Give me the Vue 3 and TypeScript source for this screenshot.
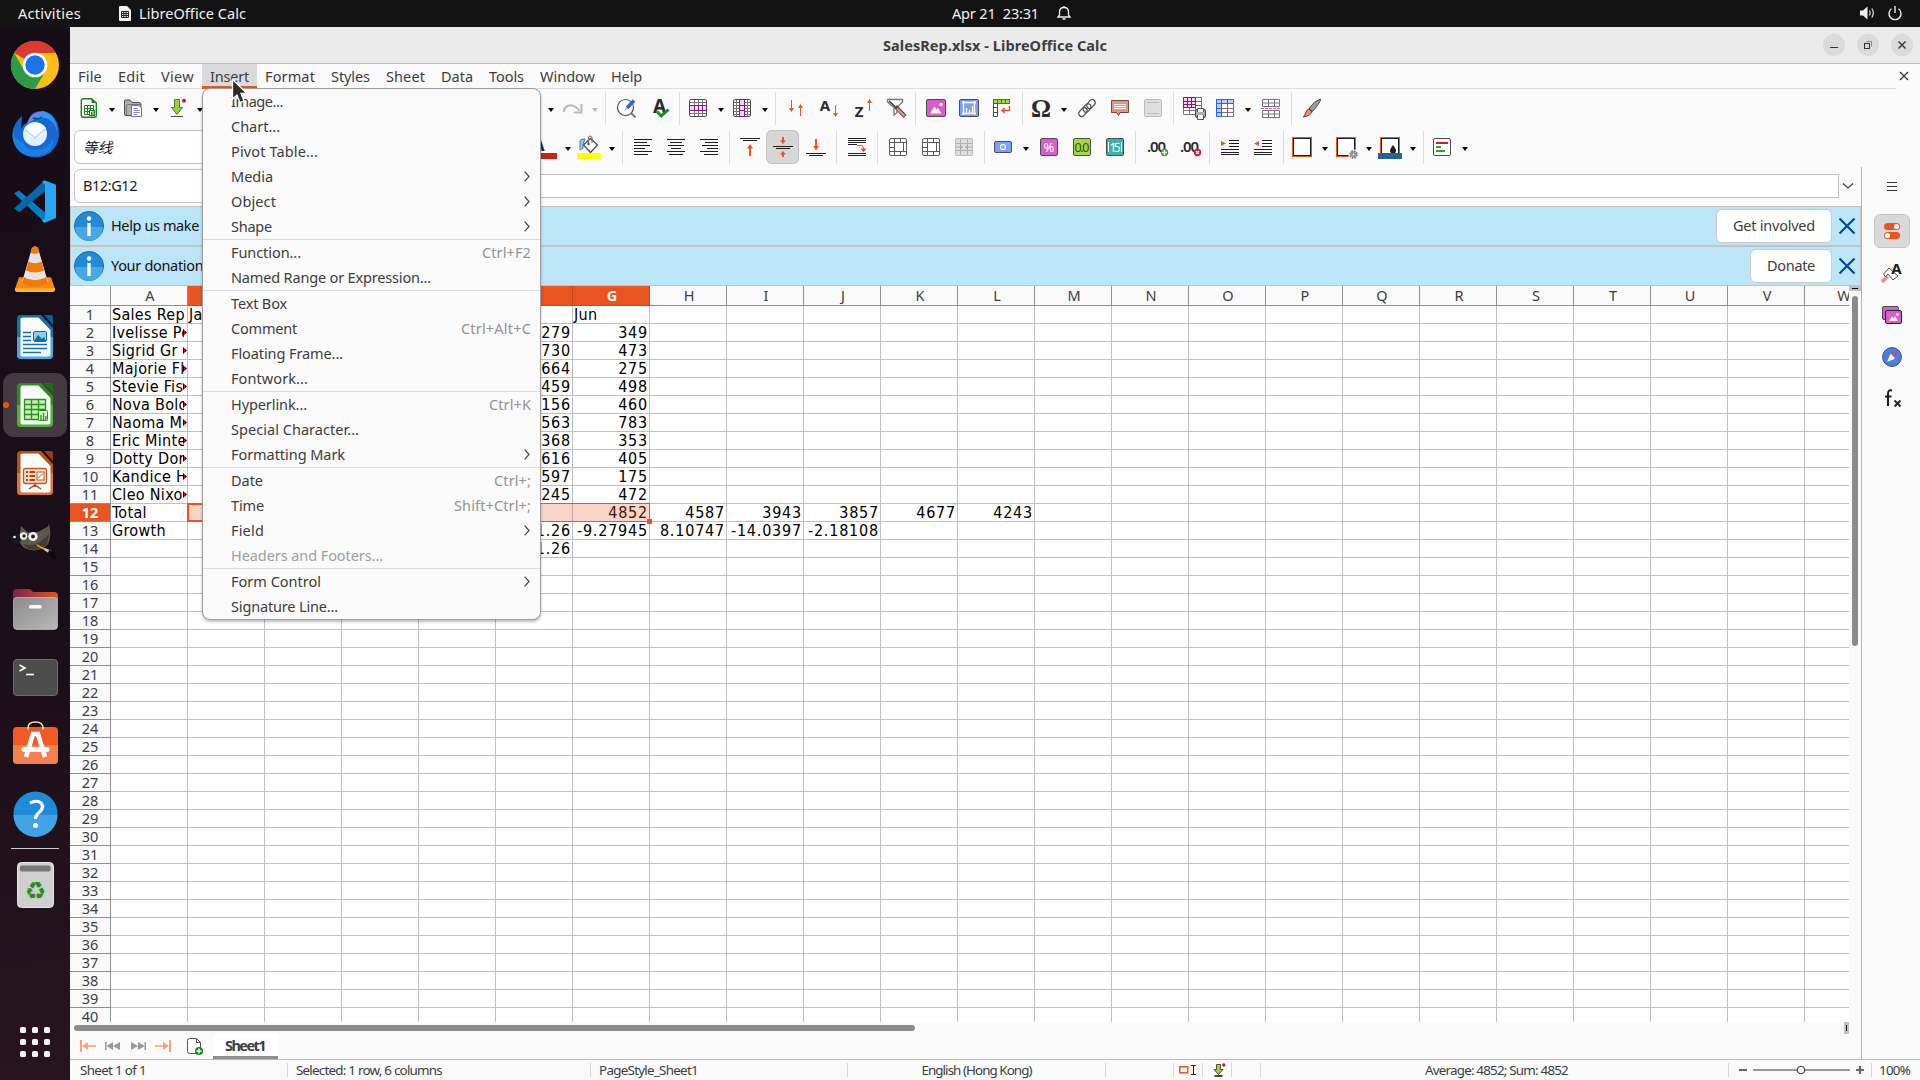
<script setup lang="ts">
import type { Directive } from 'vue'

// Spreads a label over a fixed advance width by adjusting its tracking.
const vFit: Directive<HTMLElement, number> = {
  mounted(el, binding) {
    const n = (el.textContent ?? '').length
    const range = document.createRange()
    range.selectNodeContents(el)
    const natural = range.getBoundingClientRect().width
    if (n > 0) el.style.letterSpacing = `${((binding.value - natural) / n).toFixed(3)}px`
  },
}

interface MenuItem { label: string; w: number; keys?: string; kw?: number; sub?: boolean; off?: boolean }
interface Tool { icon?: string; drop?: boolean; sep?: boolean; on?: boolean; off?: boolean }

const menus = [
  { t: 'File', w: 24 }, { t: 'Edit', w: 27 }, { t: 'View', w: 33 }, { t: 'Insert', w: 39 },
  { t: 'Format', w: 50 }, { t: 'Styles', w: 39 }, { t: 'Sheet', w: 39 }, { t: 'Data', w: 32 },
  { t: 'Tools', w: 35 }, { t: 'Window', w: 55 }, { t: 'Help', w: 31 },
]

const groups: MenuItem[][] = [
  [
    { label: 'Image...', w: 52 }, { label: 'Chart...', w: 49 }, { label: 'Pivot Table...', w: 87 },
    { label: 'Media', w: 42, sub: true }, { label: 'Object', w: 45, sub: true }, { label: 'Shape', w: 41, sub: true },
  ],
  [{ label: 'Function...', w: 70, keys: 'Ctrl+F2', kw: 49 }, { label: 'Named Range or Expression...', w: 200 }],
  [
    { label: 'Text Box', w: 56 }, { label: 'Comment', w: 66, keys: 'Ctrl+Alt+C', kw: 70 },
    { label: 'Floating Frame...', w: 112 }, { label: 'Fontwork...', w: 77 },
  ],
  [
    { label: 'Hyperlink...', w: 76, keys: 'Ctrl+K', kw: 42 }, { label: 'Special Character...', w: 128 },
    { label: 'Formatting Mark', w: 114, sub: true },
  ],
  [
    { label: 'Date', w: 32, keys: 'Ctrl+;', kw: 37 }, { label: 'Time', w: 33, keys: 'Shift+Ctrl+;', kw: 77 },
    { label: 'Field', w: 33, sub: true }, { label: 'Headers and Footers...', w: 152, off: true },
  ],
  [{ label: 'Form Control', w: 90, sub: true }, { label: 'Signature Line...', w: 107 }],
]

const S: Tool = { sep: true }
const bar1a: Tool[] = [{ icon: 'new', drop: true }, { icon: 'open', drop: true }, { icon: 'save', drop: true }]
const bar1b: Tool[] = [
  { drop: true }, { icon: 'redo', drop: true, off: true }, S, { icon: 'find' }, { icon: 'spell' }, S,
  { icon: 'row', drop: true }, { icon: 'col', drop: true }, S,
  { icon: 'sort' }, { icon: 'sortA' }, { icon: 'sortZ' }, { icon: 'filter' }, S,
  { icon: 'image' }, { icon: 'chart' }, { icon: 'pivot' }, S,
  { icon: 'omega', drop: true }, { icon: 'link' }, { icon: 'comment' }, { icon: 'headfoot' }, S,
  { icon: 'print' }, { icon: 'freeze', drop: true }, { icon: 'split' }, S, { icon: 'brush' },
]
const bar2: Tool[] = [
  { icon: 'fontcolor', drop: true }, { icon: 'fill', drop: true }, S,
  { icon: 'left' }, { icon: 'center' }, { icon: 'right' }, S,
  { icon: 'top' }, { icon: 'middle', on: true }, { icon: 'bottom' }, S, { icon: 'wrap' }, S,
  { icon: 'merge' }, { icon: 'merge' }, { icon: 'unmerge' }, S,
  { icon: 'currency', drop: true }, { icon: 'percent' }, { icon: 'number' }, { icon: 'date' }, S,
  { icon: 'decAdd' }, { icon: 'decDel' }, S, { icon: 'indent' }, { icon: 'outdent' }, S,
  { icon: 'border', drop: true }, { icon: 'bstyle', drop: true }, { icon: 'bcolor', drop: true }, S,
  { icon: 'cond', drop: true },
]

const line = (x: number, y: number, w: number, c = '#1e1e20', h = 1) =>
  `<rect x="${x}" y="${y}" width="${w}" height="${h}" fill="${c}"/>`
const lines = (rows: [number, number, number][]) => rows.map(([x, y, w]) => line(x, y, w)).join('')
const gridBox = '<rect x="3.5" y="3.5" width="17" height="17" rx="1.5" fill="#fff" stroke="#4d4d50"/>'
const arrow = (x: number, y1: number, y2: number) => {
  const d = y2 > y1 ? -1 : 1
  return `<path d="M${x} ${y1}V${y2 + d}" stroke="#e95420" fill="none"/><path d="M${x - 2.5} ${y2 + d * 4}L${x} ${y2}L${x + 2.5} ${y2 + d * 4}Z" fill="#e95420"/>`
}
const mergeArt = (fill: string, stroke: string) =>
  `<rect x="3.5" y="3.5" width="17" height="17" rx="1.5" fill="${fill}" stroke="${stroke}"/><path d="M8.5 4V20M4 7.5H20M4 12.5H8M4 16.5H20M14.500 4V7.500M14.500 16.500V20" stroke="${stroke}" fill="none"/><rect x="8.500" y="7.500" width="9" height="9" fill="#fff" stroke="${stroke}"/>`
const imgArt = '<rect x="2.500" y="3.500" width="19" height="17" rx="1.500" fill="#d95ec7" stroke="#4d4d50"/><path d="M6 17.500L10.500 10.500L12.500 13.500L14 12L17.500 17.500Z" fill="#fff"/><circle cx="17" cy="8.500" r="1.700" fill="#fff"/>'

const icons: Record<string, string> = {
  new: '<path d="M6 2.700H14.500L19.300 7V19.500Q19.300 21.300 17.500 21.300H6Q4.300 21.300 4.300 19.500V4.500Q4.300 2.700 6 2.700Z" fill="#fff" stroke="#18801a" stroke-width="1.400"/><path d="M14.500 2.500V7H19.500Z" fill="#18801a"/><path d="M7.500 9.500H16.500V18.500H7.500ZM7.500 12.500H16.500M7.500 15.500H16.500M10.500 9.500V18.500M13.500 9.500V18.500" fill="none" stroke="#18801a"/><rect x="12.500" y="14.500" width="5" height="5" fill="#fff" stroke="#18801a"/><path d="M14.500 16V19M16 15V19" stroke="#18801a"/>',
  open: '<path d="M3.500 17V5Q3.500 4 4.500 4H9L11 6.500H18Q20 6.500 20 8.500V18.500Q20 19.500 19 19.500H5Q3.500 19.500 3.500 18Z" fill="#b0b0b0" stroke="#4d4d50"/><path d="M5.500 19V9Q5.500 8.500 6.500 8.500H20" fill="none" stroke="#77777a"/><path d="M10.500 9.500H18L20.500 12V20.500H10.500Z" fill="#fff" stroke="#77777a"/><path d="M12.500 12.500H17M12.500 14.500H18.500M12.500 16.500H18.500M12.500 18.500H16" stroke="#8b7fd0"/>',
  save: '<path d="M9.500 3.500H14.500V11.500H17.500L12 18.500L6.500 11.500H9.500Z" fill="#9bd13c" stroke="#5b7b25"/><path d="M6 20.500H18" stroke="#4d4d50" /><circle cx="19" cy="4.800" r="2" fill="#c9183a"/>',
  redo: '<path d="M3.500 16Q5 8.500 12 9.500Q16.500 10.300 19.500 15" fill="none" stroke="#b9b9b9" stroke-width="2.200"/><path d="M21.500 8V16.500H13.500" fill="none" stroke="#b9b9b9" stroke-width="2"/>',
  find: '<circle cx="11.500" cy="11.500" r="8" fill="#fff" stroke="#4d4d50" stroke-width="1.200"/><path d="M17 17L21.500 21.500" stroke="#77777a" stroke-width="2"/><path d="M13 12L20 4.500" stroke="#2a62d9" stroke-width="3.400"/><path d="M10.500 14.500L13.600 13.600L11.700 11.700Z" fill="#f3a64d"/>',
  spell: '<text x="12.500" y="17" font-size="19" font-weight="700" text-anchor="middle" fill="#2a2a2c">A</text><path d="M10 15.500L14.200 20L21.500 13.500" fill="none" stroke="#148a25" stroke-width="3"/>',
  row: `${gridBox}<path d="M4 6.500H20M4 17.500H20M8.500 4V20M12.500 4V20M16.500 4V20" stroke="#77777a" fill="none"/><rect x="3.500" y="9.500" width="17" height="5" fill="#f3d3ee" stroke="#7a1e6c"/><path d="M8.500 9V15M12.500 9V15M16.500 9V15" stroke="#7a1e6c"/>`,
  col: `${gridBox}<path d="M4 6.500H20M4 9.500H20M4 12.500H20M4 15.500H20M4 18.500H20M6.500 4V20M17.500 4V20" stroke="#77777a" fill="none"/><rect x="9.500" y="3.500" width="5" height="17" fill="#f3d3ee" stroke="#7a1e6c"/><path d="M9 9.500H15M9 14.500H15" stroke="#7a1e6c"/>`,
  sort: arrow(7.5, 4, 16) + arrow(16.5, 20, 8),
  sortA: `<text x="8" y="15" font-size="15" font-weight="700" text-anchor="middle" fill="#2a2a2c">A</text>${arrow(18.5, 9, 21)}`,
  sortZ: `<text x="9" y="21" font-size="15" font-weight="700" text-anchor="middle" fill="#2a2a2c">Z</text>${arrow(19.5, 15, 3)}`,
  filter: '<g transform="translate(1.500 0)"><path d="M3 3.500H18L18 6L12.500 11.500V16.500L9.500 19V11.500L3 6Z" fill="#fff" stroke="#77777a" stroke-width="1.300"/><path d="M4.500 5L12 12" stroke="#3a3a3c" stroke-width="1.500"/><path d="M11 10.500L20.500 20.500" stroke="#4d4d50" stroke-width="4"/><path d="M12.500 12.500L19.800 20" stroke="#f28b7c" stroke-width="2.400"/></g>',
  image: imgArt,
  chart: '<rect x="2.500" y="3.500" width="19" height="17" rx="1.500" fill="#7ea0f4" stroke="#4d4d50"/><path d="M6.500 5V19M17.500 5V19M5 6.500H19M5 17.500H19M9.500 17V12M12.500 17V14M15.500 17V10" stroke="#fff" stroke-width="1.300"/>',
  pivot: '<rect x="3.500" y="3.500" width="16" height="4" fill="#a2d842" stroke="#4d7a1c"/><path d="M7.500 3V8M11.500 3V8M15.500 3V8" stroke="#4d7a1c"/><path d="M3.500 7.500H7.500V20.500H3.500ZM3.500 11.500H7.500M3.500 16.500H7.500" fill="#fff" stroke="#4d4d50"/><path d="M19.500 10V14.500H13" fill="none" stroke="#e95420" stroke-width="1.400"/><path d="M14.500 11L11 14.500L14.500 18Z" fill="#e95420"/>',
  omega: '<text x="12" y="21" font-size="25" font-weight="700" text-anchor="middle" fill="#2a2a2c" font-family="Liberation Serif, serif">Ω</text>',
  link: '<g fill="none" stroke="#4d4d50" stroke-width="1.200"><rect x="-5" y="-3" width="10" height="6" rx="3" transform="translate(16 8) rotate(-50)"/><rect x="-4.500" y="-3" width="9" height="6" rx="3" transform="translate(12 12) rotate(-50)"/><rect x="-5" y="-3" width="10" height="6" rx="3" transform="translate(8 16) rotate(-50)"/></g>',
  comment: '<path d="M3.500 4.500H20.500V16.500H12L10.500 19.500L8.500 16.500H3.500Z" fill="#f68c7a" stroke="#6b4a45"/><path d="M6 8.500H18M6 10.500H18M6 12.500H18" stroke="#fff"/>',
  headfoot: '<rect x="3.500" y="3.500" width="17" height="17" rx="1.500" fill="#dedede" stroke="#bdbdbd"/><path d="M6 6.500H18M6 17.500H18" stroke="#bdbdbd"/>',
  print: '<path d="M1.500 1.500H19.500V18.500H1.500ZM1.500 5.500H19.500M1.500 9.500H19.500M1.500 14.500H19.500M7.500 1V18M13.500 1V18" fill="#fff" stroke="#77777a"/><path d="M1.500 1.500H13.500V11.500H1.500ZM1.500 5.500H13.500M1.500 8.500H13.500M5.500 1V11M9.500 1V11" fill="#f3d3ee" stroke="#7a1e6c"/><rect x="13.500" y="13.500" width="10" height="8" rx="1.500" fill="#b0b0b0" stroke="#4d4d50"/><path d="M15.500 16V12.500H21.500V16M15.500 19V23.500H21.500V19" fill="#fff" stroke="#4d4d50"/>',
  freeze: '<path d="M3.500 3.500H20.500V20.500H3.500ZM8.500 8V20M14.500 8V20M8 12.500H20M8 16.500H20" fill="#fff" stroke="#77777a"/><path d="M3.500 3.500H20.500V7.500H8.500V20.500H3.500ZM8.500 3V7.500M14.500 3V7.500M3.500 7.500H8.500M3.500 12.500H8.500M3.500 16.500H8.500" fill="#b9cdf8" stroke="#2a62d9"/>',
  split: '<path d="M3.500 3.500H20.500V10.500H3.500ZM3.500 7H20.500M9.500 3V10M15.500 3V10M3.500 14.500H20.500V21.500H3.500ZM3.500 18H20.500M9.500 14V21M15.500 14V21" fill="#fff" stroke="#77777a"/><path d="M2 12.500H22" stroke="#e858c8" stroke-dasharray="3 1"/>',
  brush: '<path d="M9 12.500Q14 5 20.500 3Q21 4 19 7Q16 12 12.500 15.500Z" fill="#9c9c9c" stroke="#4d4d50"/><path d="M9 13L12 16Q10 20 3.500 21Q5 18.500 6 16Q7 13.500 9 13Z" fill="#f28b7c" stroke="#6b3a30"/>',
  fontcolor: '<text x="5" y="16" font-size="19" font-weight="700" text-anchor="middle" fill="#2a2a2c">A</text><rect y="18" width="24" height="6" fill="#c9211e"/>',
  fill: '<path d="M3 15V5.500Q4 4 8 4L6 9V13Z" fill="#8fd3ee" stroke="#4d7a90"/><path d="M6.500 10L13.500 3.500L20.500 10L13.500 17.500Z" fill="#fff" stroke="#4d4d50" stroke-width="1.300"/><path d="M11.500 9V2.500Q13 -0.500 15 2.500V8" fill="none" stroke="#77777a" stroke-width="1.200"/><circle cx="11.500" cy="9" r="1.200" fill="#4d4d50"/><rect y="18" width="24" height="6" fill="#ffff00"/>',
  left: lines([[3, 4, 18], [3, 7, 13], [3, 10, 16], [3, 13, 11], [3, 16, 18], [3, 19, 14]]),
  center: lines([[3, 4, 18], [6, 7, 12], [4, 10, 16], [7, 13, 10], [3, 16, 18], [5, 19, 14]]),
  right: lines([[3, 4, 18], [8, 7, 13], [5, 10, 16], [10, 13, 11], [3, 16, 18], [7, 19, 14]]),
  top: `${lines([[2, 3, 20], [5, 5, 14]])}<path d="M12 9L15 13.500H13V21H11V13.500H9Z" fill="#e95420"/>`,
  middle: `${lines([[2, 11, 20], [5, 13, 14]])}<path d="M12 9L15 5.500H13V2H11V5.500H9ZM12 16L15 19.500H13V22H11V19.500H9Z" fill="#e95420"/>`,
  bottom: `${lines([[2, 18, 20], [5, 20, 14]])}<path d="M12 15.500L15 11H13V4H11V11H9Z" fill="#e95420"/>`,
  wrap: `${lines([[3, 3, 18], [3, 5, 18], [3, 7, 18], [3, 9, 9], [3, 18, 18], [3, 20, 18]])}<path d="M12 10.500H16.500Q18.500 10.500 18.500 14" fill="none" stroke="#e95420"/><path d="M15.500 13.500H21.500L18.500 17.500Z" fill="#e95420"/>`,
  merge: mergeArt('#fff', '#5c5c5f'),
  unmerge: '<rect x="3.500" y="3.500" width="17" height="17" rx="1.500" fill="#dedede" stroke="#bababa"/><path d="M8.500 4V20M15.500 4V20M4 8.500H20M4 15.500H20M4 12H20" stroke="#b0b0b0"/><rect x="9" y="10" width="6" height="4" fill="#dedede"/><path d="M8 9.500L11 12L8 14.500ZM16 9.500L13 12L16 14.500Z" fill="#a8a8a8"/>',
  currency: '<rect x="3.500" y="6.500" width="17" height="11" rx="1.500" fill="#7ea0f4" stroke="#4d4d50"/><circle cx="12" cy="12" r="2.500" fill="none" stroke="#fff" stroke-width="1.200"/>',
  percent: '<rect x="3.500" y="3.500" width="17" height="17" rx="1.500" fill="#d95ec7" stroke="#4d4d50"/><text x="12" y="16.800" font-size="13" text-anchor="middle" fill="#fff">%</text>',
  number: '<rect x="3.500" y="3.500" width="17" height="17" rx="1.500" fill="#a2d842" stroke="#4d4d50"/><text x="12" y="16.800" font-size="12.500" textLength="15" text-anchor="middle" fill="#3a4a1c">0.0</text>',
  date: '<rect x="3.500" y="3.500" width="17" height="17" rx="1.500" fill="#3fb0a4" stroke="#4d4d50"/><path d="M5.500 7V17M18.500 7V17" stroke="#fff"/><text x="12" y="16.500" font-size="12" textLength="11" text-anchor="middle" fill="#fff">15</text>',
  decAdd: '<text x="3" y="17" font-size="15" font-weight="600" textLength="19" fill="#2a2a2c">.00</text><circle cx="20.500" cy="17.500" r="3.700" fill="#3aa21c"/><path d="M18 17.500H23M20.500 15V20" stroke="#fff" stroke-width="1.300"/>',
  decDel: '<text x="3" y="17" font-size="15" font-weight="600" textLength="19" fill="#2a2a2c">.00</text><circle cx="20.500" cy="17.500" r="3.700" fill="#c9183a"/><path d="M19 16L22 19M22 16L19 19" stroke="#fff" stroke-width="1.300"/>',
  indent: `${lines([[11, 5, 10], [11, 8, 10], [11, 11, 10], [3, 14, 18], [3, 17, 18], [3, 19, 18]])}<path d="M3 6L8 8.500L3 11Z" fill="#e95420"/>`,
  outdent: `${lines([[11, 5, 10], [11, 8, 10], [11, 11, 10], [3, 14, 18], [3, 17, 18], [3, 19, 18]])}<path d="M8 6L3 8.500L8 11Z" fill="#e95420"/>`,
  border: '<rect x="2.500" y="2.500" width="19" height="19" fill="none" stroke="#e95420"/><rect x="3.500" y="3.500" width="17" height="17" fill="#fff" stroke="#1e1e20"/>',
  bstyle: '<rect x="2.500" y="2.500" width="19" height="19" fill="none" stroke="#e95420"/><rect x="3.500" y="3.500" width="17" height="17" fill="#fff" stroke="#1e1e20"/><circle cx="19.500" cy="19.500" r="5.200" fill="#fafafa"/><circle cx="19.500" cy="19.500" r="3.200" fill="#c4c4c4" stroke="#77777a" stroke-width="2.200" stroke-dasharray="1.600 .9"/><circle cx="19.500" cy="19.500" r="1.300" fill="#fff" stroke="#77777a"/>',
  bcolor: '<rect x="2.500" y="2.500" width="19" height="19" fill="none" stroke="#e95420"/><rect x="3.500" y="3.500" width="17" height="17" fill="#fff" stroke="#1e1e20"/><path d="M15 10Q18 14 18 15.500A3 3 0 0 1 12 15.500Q12 14 15 10Z" fill="#1e1e20"/><rect y="18" width="24" height="6" fill="#2a6099"/>',
  cond: '<rect x="3.500" y="3.500" width="17" height="17" rx="1.500" fill="#fff" stroke="#4d4d50"/><path d="M6 8H18" stroke="#c9183a" stroke-width="2"/><path d="M6 12H11M6 16H15" stroke="#3aa21c" stroke-width="2"/>',
}

const doc = (c: string, d: string, dark: string, body: string) =>
  `<path d="M4 0H24L36 13V40Q36 44 32 44H4Q0 44 0 40V4Q0 0 4 0Z" fill="${d}"/><path d="M0 22H36V40Q36 44 32 44H4Q0 44 0 40Z" fill="${c}"/><path d="M27 0H34Q36 0 36 2V10Z" fill="${dark}"/><path d="M5.500 2.500H21.500L33.500 15V39.500Q33.500 41.500 31.500 41.500H5.500Q3.500 41.500 3.500 39.500V4.500Q3.500 2.500 5.500 2.500Z" fill="#fbfbfb"/>${body}`

interface DockIcon { id: string; w: number; h: number; gap: number; art: string }
// `gap` is the free space above each launcher.
const dock: DockIcon[] = [
  { id: 'chrome', w: 48, h: 48, gap: 14, art: '<circle cx="24" cy="24" r="24" fill="#fbbf12"/><path d="M24 24L3.200 12A24 24 0 0 1 45 12H24Z" fill="#dc3a2e"/><path d="M3.200 12A24 24 0 0 0 24 48L34.500 30L24 24L13.600 30Z" fill="#2c9b48"/><circle cx="24" cy="24" r="12.300" fill="#fff"/><circle cx="24" cy="24" r="9.700" fill="#1a73e8"/>' },
  { id: 'thunderbird', w: 48, h: 48, gap: 21, art: '<path d="M2 20Q0 34 9 42Q20 50 33 46Q46 41 48 26Q49 12 40 4Q33 -1 24 2Q18 5 17 12Q10 16 10 20L11 6Q4 12 2 20Z" fill="#1669d3"/><path d="M17 13Q20 2 32 1Q46 6 46 22Q44 10 34 8Q24 8 17 13Z" fill="#2f9af4"/><path d="M16 13Q21 1 33 2L31 4Q22 5 19 12Z" fill="#8f7be8"/><path d="M22 8Q27 10 31 7" stroke="#0d3e8c" stroke-width="1.500" fill="none"/><circle cx="24" cy="24" r="12" fill="#dff0fd"/><path d="M14 19Q24 38 35 18Q30 12 23 13Q17 14 14 19Z" fill="#f8fcff"/><path d="M15 20L24 28L34 19" fill="none" stroke="#b6d8f2" stroke-width="1.500"/><path d="M2 20Q3 30 12 33Q15 41 26 40Q38 39 42 28Q44 42 28 46Q12 48 5 37Q0 30 2 20Z" fill="#1b7fe6"/>' },
  { id: 'code', w: 42, h: 43, gap: 22, art: '<g transform="scale(1 .95)"><path d="M0 14L5 11L32 35V44L29 43Z" fill="#0a7bc6"/><path d="M0 30L5 34L32 11V1L29 2Z" fill="#0567ab"/><path d="M31 0.500L42 5V40L31 45Q29 45 28 43L31 40V5L28 2Q29 0.500 31 0.500Z" fill="#26a8f2"/></g>' },
  { id: 'vlc', w: 40, h: 46, gap: 23, art: '<g transform="scale(1 .98)"><path d="M4 32H36L40 44Q40 47 37 47H3Q0 47 0 44Z" fill="#f58a12"/><path d="M0 43H40V45Q40 47 37 47H3Q0 47 0 45Z" fill="#fdb52f"/><path d="M17 2Q20 -1 23 2L33 37Q20 45 7 37Z" fill="#e4e4e4"/><path d="M17 2Q20 -1 23 2L24.500 7Q20 9 15.500 7ZM13.300 16Q20 19 26.700 16L29 25Q20 29 11 25ZM9 32Q20 38 31 32L33 38Q20 45 7 38Z" fill="#f07a08"/></g>' },
  { id: 'writer', w: 36, h: 44, gap: 23, art: doc('#4aa9dc', '#0d72ae', '#0a5f96', '<path d="M6 17.500H14M6 21.500H14M6 25.500H14M6 29.500H30M6 33.500H30M6 37.500H24" stroke="#0d72ae" stroke-width="1.600"/><rect x="16.500" y="16.500" width="13" height="10" rx="1.500" fill="#8fcbea" stroke="#0d72ae"/><path d="M17 26L21 20L25 24L27 22L29 26Z" fill="#0d72ae"/>') },
  { id: 'calc', w: 36, h: 44, gap: 24, art: doc('#4fb33b', '#27901a', '#1b7012', '<path d="M7.500 16.500H28.500V36.500H7.500ZM7.500 21.500H28.500M7.500 26.500H28.500M7.500 31.500H28.500M14.500 16.500V36.500M21.500 16.500V36.500" fill="#c6efb8" stroke="#27901a" stroke-width="1.300"/><rect x="21.500" y="27.500" width="9" height="10" rx="1" fill="#e1f6d8" stroke="#27901a"/><path d="M24 32V37M26.500 30V37M28.800 33V37" stroke="#27901a" stroke-width="1.300"/>') },
  { id: 'impress', w: 36, h: 44, gap: 24, art: doc('#dd7338', '#bc4f15', '#9c3f0c', '<rect x="6.500" y="17.500" width="23" height="15" rx="2" fill="#f6d8c5" stroke="#bc5a28" stroke-width="1.300"/><path d="M9 21H11M9 25H11M9 29H11M12.500 21H18M12.500 25H18M12.500 29H18" stroke="#a8481a" stroke-width="2"/><rect x="20" y="21" width="7" height="8" fill="#fff" stroke="#bc5a28"/><path d="M21 27L23.500 25L26 22.500" stroke="#bc5a28" fill="none"/><path d="M18 33V36M18 34L12 38M18 34L24 38" stroke="#a8481a" stroke-width="1.500"/>') },
  { id: 'gimp', w: 48, h: 38, gap: 27, art: '<path d="M10 4L16 10Q26 12 32 7Q38 5 38 1Q41 14 37 22Q30 30 19 28Q10 26 8 18Z" fill="#5d584c"/><path d="M12 22Q24 26 34 16L38 12L36 22Q28 30 17 27Z" fill="#413c34"/><circle cx="5" cy="17" r="5" fill="#16181a"/><circle cx="3.500" cy="15" r="1.300" fill="#fff"/><circle cx="12.500" cy="14" r="3.700" fill="#f4f4f4"/><circle cx="22" cy="14.500" r="4.600" fill="#f4f4f4"/><circle cx="13" cy="14" r="1.700" fill="#222"/><circle cx="22" cy="14.500" r="2" fill="#222"/><path d="M25 22L40 29L39 31L26 24Z" fill="#f0962c"/><path d="M34 26L41 29L39 32L33 28Z" fill="#c9c9c9"/><path d="M38 28Q44 28 46 38Q39 37 37 31Z" fill="#0b0b0c"/>' },
  { id: 'files', w: 44, h: 41, gap: 29, art: '<defs><linearGradient id="fo"><stop offset="0" stop-color="#7c2050"/><stop offset="1" stop-color="#e95420"/></linearGradient><linearGradient id="fg" x2="1" y2="1"><stop offset="0" stop-color="#8c8c8c"/><stop offset="1" stop-color="#b8b8b8"/></linearGradient></defs><path d="M0 12V4Q0 0 4 0H16Q18 0 20 3H41Q45 3 45 7V12Z" fill="url(#fo)"/><path d="M0.500 11.500Q0.500 8.500 4 8.500H41Q44.500 8.500 44.500 11.500V37Q44.500 40.500 41 40.500H4Q0.500 40.500 0.500 37Z" fill="url(#fg)" stroke="#c5c5c5" stroke-width=".7"/><rect x="16" y="16" width="12.500" height="3.500" rx="1.500" fill="#fff"/>' },
  { id: 'terminal', w: 44, h: 37, gap: 29, art: '<rect x=".5" y=".5" width="44" height="36" rx="3.500" fill="#4c4c4c" stroke="#6d6d6d"/><path d="M6.500 6L12 9L6.500 12" fill="none" stroke="#fff" stroke-width="1.600"/><path d="M13 15.500H21" stroke="#fff" stroke-width="1.600"/>' },
  { id: 'store', w: 44, h: 43, gap: 25, art: '<rect y="6" width="45" height="37" rx="4" fill="#f15a24"/><path d="M0 24H45V39Q45 43 41 43H4Q0 43 0 39Z" fill="#f4814c"/><path d="M15 8.500V7Q15 1 22.500 1Q30 1 30 7V8.500" fill="none" stroke="#f8dcae" stroke-width="1.600"/><path d="M13 36L20 13H25L32 36" fill="none" stroke="#fff" stroke-width="4.600"/><rect x="8.500" y="26" width="28" height="5" rx="2.500" fill="#fff"/>' },
  { id: 'help', w: 44, h: 45, gap: 27, art: '<circle cx="22.500" cy="22.500" r="22" fill="#208ad8"/><path d="M0.500 24H44.500A22 22 0 0 1 0.500 24Z" fill="#43a4e5"/><path d="M17 12Q24 8.500 28 12Q31.500 16 27 20.500Q22.500 24 22.500 28" fill="none" stroke="#fff" stroke-width="3.200"/><circle cx="22.500" cy="34.500" r="2.500" fill="#fff"/>' },
]

const cols = 'ABCDEFGHIJKLMNOPQRSTUVW'.split('')
const names = ['Sales Rep', 'Ivelisse Pe', 'Sigrid Gr', 'Majorie Fl', 'Stevie Fis', 'Nova Bolo', 'Naoma M', 'Eric Minte', 'Dotty Dor', 'Kandice H', 'Cleo Nixo', 'Total', 'Growth']
const may = ['279', '730', '664', '459', '156', '563', '368', '616', '597', '245']
const jun = ['349', '473', '275', '498', '460', '783', '353', '405', '175', '472']
const cells: Record<string, string> = { B1: 'Jan', G1: 'Jun', F13: '1.26', F14: '1.26', G12: '4852', H12: '4587', I12: '3943', J12: '3857', K12: '4677', L12: '4243', G13: '-9.27945', H13: '8.10747', I13: '-14.0397', J13: '-2.18108' }
names.forEach((n, i) => { cells[`A${i + 1}`] = n })
may.forEach((n, i) => { cells[`F${i + 2}`] = n })
jun.forEach((n, i) => { cells[`G${i + 2}`] = n })
const isNum = (v?: string) => !!v && /^-?[\d.]+$/.test(v)

const notices = [
  { t: 'Help us make', w: 88, b: 'Get involved', bw: 82 },
  { t: 'Your donations', w: 99, b: 'Donate', bw: 48 },
]
</script>

<template>
  <div class="screen">
    <header class="topbar">
      <span class="act"><span v-fit="63">Activities</span></span>
      <svg class="app-ico" width="12" height="15" viewBox="0 0 12 15"><path d="M1 0H8L12 4V14Q12 15 11 15H1Q0 15 0 14V1Q0 0 1 0Z" fill="#f2f2f2" /><path d="M2.500 5.500H9.500V11.500H2.500ZM2.500 7.500H9.500M2.500 9.500H9.500M4.800 5.500V11.500M7.200 5.500V11.500" fill="none" stroke="#222" /></svg>
      <span v-fit="107">LibreOffice Calc</span>
      <span v-fit="87" class="clock">Apr 21&nbsp; 23:31</span>
      <svg class="bell" width="14" height="16" viewBox="0 0 14 16" fill="none" stroke="#eee" stroke-width="1.300"><path d="M1 12H13L11.500 10V6.500Q11.500 2.500 7 2.500Q2.500 2.500 2.500 6.500V10Z" /><path d="M5.500 14H8.500M7 1V2.500" /></svg>
      <svg class="vol" width="16" height="14" viewBox="0 0 16 14"><path d="M0 4.500H3L7.500 .5V13.500L3 9.500H0Z" fill="#eee" /><path d="M9.500 4.500Q11 7 9.500 9.500M11.800 2.500Q14.800 7 11.800 11.500" fill="none" stroke="#ddd" stroke-width="1.200" /></svg>
      <svg width="14" height="15" viewBox="0 0 14 15" fill="none" stroke="#eee" stroke-width="1.400"><path d="M7 0V7M3.500 2.800A6 6 0 1 0 10.500 2.800" /></svg>
    </header>

    <div class="main">
      <nav class="dock">
        <div v-for="d in dock" :key="d.id" class="launch" :class="{ active: d.id === 'calc' }" :style="{ marginTop: d.gap + 'px', height: d.h + 'px' }">
          <svg :width="d.w" :height="d.h" :viewBox="`0 0 ${d.w} ${d.h}`" v-html="d.art" />
        </div>
        <i class="dock-rule" />
        <svg class="trash" width="36" height="46" viewBox="0 0 36 46"><rect x=".5" y=".5" width="36" height="45" rx="4" fill="#cfcfcf" stroke="#e6e6e6" /><rect x="3" y="3.500" width="30.500" height="6" rx="2" fill="#777" /><text x="18.500" y="36.500" font-size="24" text-anchor="middle" fill="#2a8c1c" font-family="DejaVu Sans, sans-serif">♻</text></svg>
        <div class="apps"><i v-for="n in 9" :key="n" /></div>
      </nav>

      <section class="window">
        <div class="titlebar">
          <span class="title"><span v-fit="224">SalesRep.xlsx - LibreOffice Calc</span></span>
          <div class="winbtns">
            <b><svg width="22" height="22"><path d="M7 13.500H15" stroke="#333" /></svg></b>
            <b><svg width="22" height="22" fill="none"><path d="M9.500 7.500H14.500V12.500" stroke="#888" /><rect x="7.500" y="9.500" width="5" height="5" stroke="#333" /></svg></b>
            <b><svg width="22" height="22"><path d="M7.500 7.500L14.500 14.500M14.500 7.500L7.500 14.500" stroke="#333" stroke-width="1.400" /></svg></b>
          </div>
        </div>
        <div class="menubar">
          <div class="menus">
            <span v-for="m in menus" :key="m.t" class="mi" :class="{ open: m.t === 'Insert' }" :style="{ width: m.w + 16 + 'px' }"><span v-fit="m.w">{{ m.t }}</span></span>
          </div>
          <svg class="docclose" width="10" height="10"><path d="M1 1L9 9M9 1L1 9" stroke="#333" stroke-width="1.300" /></svg>
        </div>

        <div class="toolbar t1">
          <div v-for="(t, i) in bar1a" :key="'a' + i" class="tool dd">
            <svg width="24" height="24" viewBox="0 0 24 24" v-html="icons[t.icon!]" /><i class="caret" />
          </div>
          <div class="spring" />
          <template v-for="(t, i) in bar1b" :key="i">
            <i v-if="t.sep" class="sep" />
            <div v-else class="tool" :class="{ dd: t.drop, off: t.off }">
              <svg width="24" height="24" viewBox="0 0 24 24" v-html="t.icon ? icons[t.icon] : ''" /><i v-if="t.drop" class="caret" />
            </div>
          </template>
        </div>
        <div class="toolbar t2">
          <div class="combo font">等线</div>
          <template v-for="(t, i) in bar2" :key="i">
            <i v-if="t.sep" class="sep" />
            <div v-else class="tool" :class="{ dd: t.drop, on: t.on }">
              <svg width="24" height="24" viewBox="0 0 24 24" v-html="icons[t.icon!]" /><i v-if="t.drop" class="caret" />
            </div>
          </template>
        </div>

        <div class="body">
          <div class="work">
            <div class="formula">
              <div class="combo name"><span v-fit="54">B12:G12</span></div>
              <div class="input" />
              <svg width="12" height="8" fill="none"><path d="M1 1.500L6 6L11 1.500" stroke="#444" stroke-width="1.300" /></svg>
            </div>
            <div v-for="b in notices" :key="b.t" class="info">
              <svg width="30" height="30"><circle cx="15" cy="15" r="14.500" fill="#2489d8" stroke="#1d6291" /><path d="M1 16H29A14 14 0 0 1 1 16Z" fill="#48a7e6" /><circle cx="15" cy="7.500" r="2.200" fill="#fff" /><rect x="13.300" y="12" width="3.400" height="13" fill="#fff" /></svg>
              <span class="msg"><span v-fit="b.w">{{ b.t }}</span></span>
              <span class="btn"><span v-fit="b.bw">{{ b.b }}</span></span>
              <svg class="x" width="18" height="18"><path d="M1.500 1.500L16.500 16.500M16.500 1.500L1.500 16.500" stroke="#004c8f" stroke-width="2.200" /></svg>
            </div>

            <div class="sheetwrap">
              <div class="sheet">
                <div class="hrow">
                  <span class="corner" />
                  <span v-for="(c, i) in cols" :key="c" class="hc" :class="{ sel: i > 0 && i < 7 }">{{ c }}</span>
                </div>
                <div v-for="r in 40" :key="r" class="row">
                  <span class="rh" :class="{ sel: r === 12 }">{{ r }}</span>
                  <span v-for="c in cols" :key="c" class="c" :class="{ num: isNum(cells[c + r]), cut: c === 'A' && r > 1 && r < 12 }">{{ cells[c + r] }}</span>
                </div>
                <div class="range"><i class="handle" /></div>
                <div class="cursor-cell" />
              </div>
              <div class="vscroll"><i class="splitv" /><i class="thumbv" /></div>
            </div>
            <div class="hscroll"><i class="thumbh" /><i class="splith" /></div>
            <div class="tabs">
              <svg class="tabnav" width="92" height="14" viewBox="0 0 92 14"><g fill="#f5a27f"><rect width="2" height="12" y="1" /><path d="M2 7L8 3V11Z" /><rect x="6" y="6.300" width="10" height="1.600" /><rect x="89" y="1" width="2" height="12" /><path d="M89 7L83 3V11Z" /><rect x="75" y="6.300" width="10" height="1.600" /></g><g fill="#9a9a9a"><rect x="25" y="3" width="1.500" height="8" /><path d="M26.500 7L33 3V11ZM33 7L40 3V11ZM51 3L58 7L51 11ZM58 3L65 7L58 11Z" /><rect x="64.500" y="3" width="1.500" height="8" /></g></svg>
              <svg class="addsheet" width="16" height="17"><path d="M2.500 .5H9.500L13.500 4.500V13.500Q13.500 15.500 11.500 15.500H2.500Q.5 15.500 .5 13.500V2.500Q.5 .5 2.500 .5Z" fill="#fff" stroke="#555" /><path d="M9.500 .5V4.500H13.500" fill="none" stroke="#555" /><circle cx="12" cy="13" r="4" fill="#148a25" /><path d="M9.500 13H14.500M12 10.500V15.500" stroke="#fff" stroke-width="1.400" /></svg>
              <span class="tab"><span v-fit="40">Sheet1</span></span>
            </div>
          </div>

          <aside class="side">
            <svg class="burger" width="10" height="10"><path d="M0 .5H10M0 4.500H10M0 8.500H10" stroke="#333" /></svg>
            <div class="sbtn on"><svg width="24" height="24"><rect x="4" y="4" width="16" height="7" rx="3.500" fill="#e95420" /><circle cx="16.500" cy="7.500" r="2.500" fill="#fff" /><rect x="4" y="13" width="16" height="7" rx="3.500" fill="#e95420" /><circle cx="7.500" cy="16.500" r="2.500" fill="#fff" /></svg></div>
            <div class="sbtn"><svg width="24" height="24"><path d="M7.500 15.500L2 21" stroke="#f68c7a" stroke-width="3.500" /><path d="M3.500 13L9 7L18 15L13 19L8 13L5.500 16Z" fill="#fff" stroke="#4d4d50" /><text x="16.500" y="13" font-size="15" font-weight="700" text-anchor="middle" fill="#1e1e20">A</text></svg></div>
            <div class="sbtn"><svg width="24" height="24"><rect x="2.500" y="3.500" width="16" height="13" rx="1.500" fill="#d95ec7" stroke="#4d4d50" /><rect x="5.500" y="7.500" width="16" height="13" rx="1.500" fill="#d95ec7" stroke="#2a2a2c" /><path d="M9 18L12 13.500L13.500 15.500L15 13L18 18Z" fill="#fff" /><circle cx="17.500" cy="11.500" r="1.300" fill="#fff" /></svg></div>
            <div class="sbtn"><svg width="24" height="24"><circle cx="12" cy="12" r="9.400" fill="#4a7be8" stroke="#444a60" /><path d="M7 17L10 9.500Q12 8.500 14 10.500Q15.300 12 14.500 14Z" fill="#f2f2f2" /><path d="M17 7L11.500 9.500L14.500 12.500Z" fill="#e33b3b" /></svg></div>
            <div class="sbtn"><svg width="24" height="24"><path d="M12 3.500Q8 2.500 8 6.500V19M5 9.500H11.500" fill="none" stroke="#1e1e20" stroke-width="2" /><path d="M14.500 13.500L20.500 19.500M20.500 13.500L14.500 19.500" stroke="#2a2a2c" stroke-width="2" /></svg></div>
          </aside>
        </div>

        <footer class="status">
          <span class="s1"><span v-fit="66">Sheet 1 of 1</span></span>
          <span class="s2"><span v-fit="146">Selected: 1 row, 6 columns</span></span>
          <span class="s3"><span v-fit="99">PageStyle_Sheet1</span></span>
          <span class="s4"><span v-fit="110">English (Hong Kong)</span></span>
          <span class="s5" />
          <span class="s6"><svg width="18" height="12"><rect x=".8" y="2.800" width="8" height="6" fill="none" stroke="#e95420" stroke-width="1.500" /><path d="M12 1.500H17M12 10.500H17M14.500 1.500V10.500" stroke="#222" /></svg></span>
          <span class="s6 dl"><svg width="14" height="16"><path d="M3.500 2.500H7.500V7.500H10L5.500 12.500L1 7.500H3.500Z" fill="#9bd13c" stroke="#4b5b35" /><path d="M1.500 14H9.500" stroke="#444" stroke-width="2" /><circle cx="10.800" cy="3" r="1.700" fill="#c9183a" /></svg></span>
          <span class="s6" />
          <span class="s7"><span v-fit="143">Average: 4852; Sum: 4852</span></span>
          <span class="s8"><svg width="128" height="14"><path d="M1 7H9M118 7H126M122 3V11" stroke="#666" stroke-width="2.200" /><path d="M15 7H112" stroke="#999" stroke-width="2" /><circle cx="63" cy="7" r="3.700" fill="#fff" stroke="#555" stroke-width="1.300" /></svg></span>
          <span class="s9"><span v-fit="31">100%</span></span>
        </footer>
      </section>
    </div>

    <div class="popup">
      <div v-for="(g, gi) in groups" :key="gi" class="grp">
        <div v-for="it in g" :key="it.label" class="item" :class="{ dis: it.off }">
          <span v-fit="it.w">{{ it.label }}</span>
          <span v-if="it.keys" v-fit="it.kw ?? 40" class="keys">{{ it.keys }}</span>
          <svg v-if="it.sub" class="sub" width="6" height="11" fill="none"><path d="M.7 .7L5 5.500L.7 10.300" stroke="#444" stroke-width="1.200" /></svg>
        </div>
      </div>
    </div>
    <svg class="pointer" width="19" height="27" viewBox="0 0 19 27"><path d="M1.500 1.500V21L6 17L9 24.500L13 23L10 15.500H16Z" fill="#2b2b2b" stroke="#fff" stroke-width="1.300" /></svg>
  </div>
</template>

<style>
body { background: #1a0f17; overflow: hidden; }
</style>

<style scoped>
.screen { position: relative; width: 1920px; height: 1080px; overflow: hidden; display: flex; flex-direction: column; font: 14.5px "Noto Sans", "Open Sans", sans-serif; color: #3d3d3d; white-space: nowrap; }
.screen * { box-sizing: border-box; }
svg { display: block; flex: none; overflow: visible; }
i { display: block; flex: none; font-style: normal; }
.topbar { height: 27px; background: #131313; color: #f0f0f0; display: flex; align-items: center; padding: 0 18px 1px; line-height: 26px; }
.act { width: 101px; }
.app-ico { margin-right: 8px; }
.clock { margin-left: 706px; }
.bell { margin-left: 18px; }
.vol { margin-left: auto; margin-right: 12px; }
.main { flex: 1; display: flex; min-height: 0; }
.dock { width: 70px; flex: none; background: linear-gradient(165deg, #170d16 0%, #1b0f19 60%, #28141f 100%); display: flex; flex-direction: column; align-items: center; }
.launch { display: flex; justify-content: center; width: 70px; position: relative; flex: none; }
.launch.active::before { content: ""; position: absolute; left: 3px; top: -10px; width: 64px; height: 64px; border-radius: 11px; background: #433a42; }
.launch.active::after { content: ""; position: absolute; left: 3px; top: 19px; width: 6px; height: 6px; border-radius: 50%; background: #e95420; }
.launch svg { position: relative; }
.dock-rule { width: 48px; height: 1px; background: #cfcacd; margin-top: 12px; }
.trash { margin-top: 13px; }
.apps { margin-top: 119px; display: grid; grid-template-columns: repeat(3, 6px); gap: 6px; }
.apps i { width: 6px; height: 6px; border-radius: 1.5px; background: #f4f4f4; }

.window { flex: 1; min-width: 0; display: flex; flex-direction: column; background: #fafafa; }
.titlebar { height: 37px; background: #ebebeb; border-bottom: 1px solid #bdbdbd; display: flex; align-items: center; justify-content: flex-end; padding-right: 7px; }
.title { font-weight: 700; width: 224px; margin-right: 716px; }
.winbtns { display: flex; gap: 12px; }
.winbtns b { width: 22px; height: 22px; border-radius: 50%; background: #dadada; }
.menubar { height: 25px; display: flex; align-items: center; }
.menus { width: 1826px; height: 25px; border-bottom: 1px solid #dcdcdc; display: flex; }
.mi { padding: 0 8px; line-height: 24px; height: 25px; }
.mi.open { background: #dadada; border-bottom: 3px solid #e95420; }
.docclose { margin-left: 3px; margin-bottom: 1px; }
.toolbar { display: flex; align-items: center; }
.t1 { height: 38px; padding-left: 4px; }
.t2 { height: 40px; padding-left: 4px; }
.spring { width: 307px; flex: none; }
.tool { width: 33px; height: 34px; flex: none; display: flex; align-items: center; padding-left: 5px; }
.tool.dd { width: 44px; padding-left: 3px; }
.tool.on { background: #d6d6d6; border-radius: 6px; box-shadow: inset 0 0 0 1px #c2c2c2; }
.tool svg { font-family: "Noto Sans", sans-serif; }
.caret { width: 0; height: 0; border: 3.5px solid transparent; border-top: 4px solid #000; border-bottom: 0; margin: 3px 0 0 7.5px; }
.off .caret { border-top-color: #bbb; }
.sep { width: 1px; height: 33px; background: #dcdcdc; margin: 0 3px 0 4px; }
.combo { background: #fff; border: 1px solid #c4c4c4; border-radius: 6px; height: 34px; line-height: 31px; color: #1a1a1a; flex: none; }
.font { width: 440px; margin-right: 16px; padding-left: 8px; font-family: "Noto Sans CJK SC", sans-serif; font-size: 14.67px; font-style: italic; }
.body { flex: 1; display: flex; min-height: 0; }
.work { width: 1791px; display: flex; flex-direction: column; }
.formula { height: 39px; display: flex; align-items: center; padding: 0 7px 1px 4px; }
.name { width: 200px; padding-left: 8px; }
.input { flex: 1; height: 24px; margin: 0 3px 0 60px; border: 1px solid #c0c0c0; background: #fff; }
.info { height: 40px; background: #bce5f8; border: 1px solid #c3c3c3; display: flex; align-items: center; padding: 0 4px 0 3px; color: #111; }
.msg { margin-left: 7px; margin-right: auto; padding-bottom: 2px; }
.btn { height: 34px; line-height: 31px; padding: 0 16px; border: 1px solid #c9c9c9; border-radius: 6px; background: #fff; color: #3d3d3d; margin-right: 6px; }
.sheetwrap { height: 736px; display: flex; }
.sheet { position: relative; width: 1779px; height: 736px; overflow: hidden; background: #fff; }
.hrow, .row { display: flex; width: 1820px; }
.hrow { height: 20px; }
.corner { width: 41px; background: #fafafa; border-right: 1px solid #8f8f8f; border-bottom: 1px solid #8f8f8f; flex: none; }
.hc { width: 77px; flex: none; text-align: center; line-height: 19px; padding-left: 2px; background: #fafafa; border-right: 1px solid #8f8f8f; border-bottom: 1px solid #8f8f8f; }
.hc.sel { background: #e95420; color: #fff; font-weight: 700; border-color: #c9471b; }
.row { height: 18px; }
.rh { width: 41px; flex: none; text-align: center; line-height: 17px; background: #fafafa; border-right: 1px solid #8f8f8f; border-bottom: 1px solid #8f8f8f; }
.rh.sel { background: #e95420; color: #fff; font-weight: 700; }
.c { position: relative; width: 77px; flex: none; height: 18px; overflow: hidden; border-right: 1px solid #c0c0c0; border-bottom: 1px solid #c0c0c0; font: 16px/17px "DejaVu Sans Condensed", "DejaVu Sans", sans-serif; font-stretch: condensed; letter-spacing: 0.3px; color: #000; padding-left: 1px; }
.c.num { text-align: right; letter-spacing: 0.8px; padding: 0 1px 0 0; }
.c.cut::after { content: ""; position: absolute; right: 0; top: 0; width: 3px; height: 17px; background: #fff; }
.c.cut::before { content: ""; position: absolute; z-index: 1; right: 0; top: 5px; width: 4px; height: 7px; background: linear-gradient(90deg, #000 1px, #d00 1px, #d00 2px, #000 2px); clip-path: polygon(0 0, 100% 50%, 0 100%); }
.range { position: absolute; left: 118px; top: 217px; width: 462px; height: 19px; background: rgba(233, 84, 32, 0.25); border: 1px solid #e95420; }
.handle { position: absolute; right: -3px; bottom: -3px; width: 5px; height: 5px; background: #e95420; }
.cursor-cell { position: absolute; left: 117px; top: 217px; width: 78px; height: 19px; border: 2px solid #e95420; }
.vscroll { width: 12px; }
.splitv { width: 12px; height: 5px; background: #000; border: solid #c0c0c0; border-width: 2px 3px; }
.thumbv { width: 6px; height: 350px; margin: 5px 0 0 3px; border-radius: 3px; background: #8b8b8b; }
.hscroll { height: 12px; display: flex; justify-content: space-between; padding: 3px 12px 0 4px; }
.thumbh { width: 841px; height: 6px; border-radius: 3px; background: #8b8b8b; }
.splith { width: 5px; height: 12px; margin-top: -3px; background: #000; border: solid #c0c0c0; border-width: 3px 2px; }
.tabs { height: 25px; display: flex; align-items: center; padding-left: 10px; }
.tabnav { margin-bottom: 2px; }
.addsheet { margin-left: 15px; margin-bottom: 1px; }
.tab { margin-left: 10px; height: 25px; line-height: 22px; padding: 0 12px; width: 65px; background: #fff; border-bottom: 3px solid #8f8f8f; font-weight: 700; }
.side { width: 59px; border-left: 1px solid #b5b5b5; display: flex; flex-direction: column; align-items: center; padding-left: 2px; }
.burger { margin: 15px 0 22px; }
.sbtn { width: 36px; height: 34px; margin-bottom: 8px; display: flex; align-items: center; justify-content: center; }
.sbtn.on { background: #d9d9d9; border: 1px solid #c4c4c4; border-radius: 6px; }
.status { height: 21px; border-top: 1px solid #b8b8b8; display: flex; align-items: center; font-size: 13.4px; line-height: 20px; flex: none; }
.status > span { height: 14px; border-right: 1px solid #d8d8d8; display: flex; align-items: center; flex: none; }
.s1 { width: 218px; padding-left: 10px; }
.s2 { width: 303px; padding-left: 8px; }
.s3 { width: 257px; padding-left: 8px; }
.s4 { width: 258px; justify-content: center; }
.s5 { width: 68px; }
.s6 { width: 29px; justify-content: center; }
.dl { padding-left: 5px; }
.s7 { width: 468px; justify-content: center; padding-left: 4px; }
.s8 { width: 143px; padding-left: 9px; }
.status > .s9 { padding-left: 7px; border: 0; }

.popup { position: absolute; left: 202px; top: 88px; width: 339px; height: 532px; background: #fafafa; border: 1px solid #9c9c9c; border-radius: 8px; box-shadow: 0 2px 3px rgba(0, 0, 0, 0.25); overflow: hidden; }
.grp + .grp { border-top: 1px solid #dcdcdc; }
.item { height: 25px; line-height: 25px; padding: 0 9px 0 28px; display: flex; align-items: center; justify-content: space-between; }
.keys { color: #949494; }
.dis { color: #a0a0a0; }
.sub { margin-right: 1px; }
.pointer { position: absolute; left: 231px; top: 78px; }
</style>
